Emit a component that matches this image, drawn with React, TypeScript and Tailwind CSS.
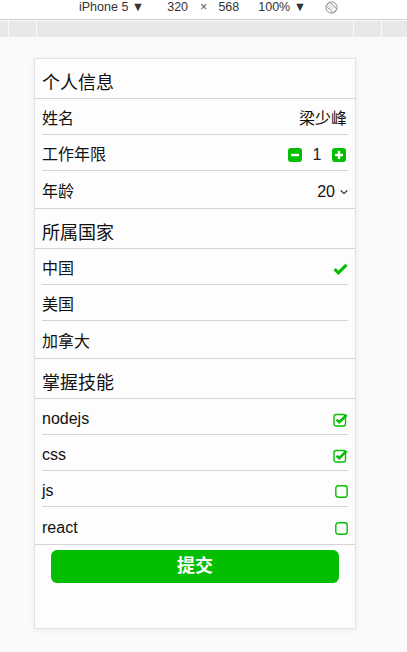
import React from "react";

const GREEN = "#04be02";

function StepIcon({ plus }: { plus?: boolean }) {
  return (
    <svg width="14" height="14" viewBox="0 0 14 14">
      <rect x="0" y="0" width="14" height="14" rx="3" fill={GREEN} />
      <rect x="3" y="5.8" width="8" height="2.4" fill="#fff" />
      {plus && <rect x="5.8" y="3" width="2.4" height="8" fill="#fff" />}
    </svg>
  );
}

function Check() {
  return (
    <svg width="15" height="12" viewBox="0 0 15 12">
      <path
        d="M1.6 6.2 L5.4 9.8 L13.4 1.8"
        fill="none"
        stroke={GREEN}
        strokeWidth="3.2"
        strokeLinejoin="miter"
      />
    </svg>
  );
}

function Box({ checked }: { checked: boolean }) {
  if (checked) {
    return (
      <svg width="15" height="15" viewBox="0 0 15 15">
        <rect x="1" y="2.5" width="11.5" height="11.5" rx="2.2" fill="#fff" stroke={GREEN} strokeWidth="1.4" />
        <path d="M3.6 7.6 L6.3 10.2 L13.6 2.9" fill="none" stroke={GREEN} strokeWidth="2.6" />
      </svg>
    );
  }
  return (
    <svg width="13" height="13" viewBox="0 0 13 13">
      <rect x="0.8" y="0.8" width="11.4" height="11.4" rx="2.4" fill="#fff" stroke={GREEN} strokeWidth="1.4" />
    </svg>
  );
}

function Rotate() {
  return (
    <svg width="13" height="13" viewBox="0 0 13 13">
      <circle cx="6.5" cy="6.5" r="5.6" fill="none" stroke="#8a8a8a" strokeWidth="1" />
      <g transform="rotate(-45 6.5 6.5)">
        <rect x="3.8" y="1.6" width="5.4" height="9.8" rx="1" fill="#fff" stroke="#8a8a8a" strokeWidth="0.9" />
        <line x1="4" y1="4" x2="9" y2="4" stroke="#aaa" strokeWidth="0.7" />
        <line x1="4" y1="6" x2="9" y2="6" stroke="#aaa" strokeWidth="0.7" />
        <line x1="4" y1="8" x2="9" y2="8" stroke="#aaa" strokeWidth="0.7" />
      </g>
    </svg>
  );
}

function Header({ title }: { title: string }) {
  return (
    <div className="h-[40px] pt-[9px] pl-[7px] flex items-center border-b border-[#d4d4d4] text-[18px] text-[#111]">
      {title}
    </div>
  );
}

function Row({
  label,
  last,
  children,
}: {
  label: string;
  last?: boolean;
  children?: React.ReactNode;
}) {
  return (
    <div
      className={
        last
          ? "h-[37px] pt-[5px] mx-[7px] flex items-center justify-between"
          : "h-[36px] pt-[5px] mx-[7px] flex items-center justify-between border-b border-[#d4d4d4]"
      }
    >
      <span>{label}</span>
      {children}
    </div>
  );
}

export default function App() {
  const skills = [
    { name: "nodejs", on: true },
    { name: "css", on: true },
    { name: "js", on: false },
    { name: "react", on: false },
  ];

  return (
    <div
      className="min-h-[652px] bg-[#fafafa]"
      style={{ fontFamily: '"Liberation Sans", "Noto Sans CJK SC", sans-serif' }}
    >
      {/* device toolbar */}
      <div className="h-[20px] bg-white border-b border-[#cfcfcf] flex items-start pl-[79px] text-[12.5px] leading-[15px] text-[#333]">
        <span>iPhone 5 ▼</span>
        <span className="ml-[23px]">320</span>
        <span className="ml-[12px] text-[#555]">×</span>
        <span className="ml-[11px]">568</span>
        <span className="ml-[19px]">100% ▼</span>
        <span className="ml-[19px] pt-[1px]">
          <Rotate />
        </span>
      </div>
      <div className="mt-px h-[16px] flex gap-px">
        <div className="w-[8px] bg-[#e8e8e8]" />
        <div className="w-[27px] bg-[#e8e8e8]" />
        <div className="w-[316px] bg-[#e8e8e8]" />
        <div className="w-[27px] bg-[#e8e8e8]" />
        <div className="flex-1 bg-[#e8e8e8]" />
      </div>

      {/* card */}
      <div className="ml-[34px] mt-[21px] w-[322px] h-[571px] bg-[#fdfdfd] border border-[#e2e2e2] shadow-[0_1px_6px_rgba(0,0,0,0.07)] text-[16px] text-[#111]">
        <Header title="个人信息" />
        <div className="border-b border-[#d4d4d4]">
          <Row label="姓名">
            <span className="mr-px">梁少峰</span>
          </Row>
          <Row label="工作年限">
            <div className="flex items-center gap-[10px] mr-[2px]">
              <StepIcon />
              <span className="w-[10px] text-center text-[#222]">1</span>
              <StepIcon plus />
            </div>
          </Row>
          <Row label="年龄" last>
            <div className="flex items-center gap-[5px]">
              <span>20</span>
              <svg width="8" height="6" viewBox="0 0 8 6">
                <path d="M0.8 1.5 L4 4.6 L7.2 1.5" fill="none" stroke="#222" strokeWidth="1.1" />
              </svg>
            </div>
          </Row>
        </div>

        <Header title="所属国家" />
        <div className="border-b border-[#d4d4d4]">
          <Row label="中国">
            <Check />
          </Row>
          <Row label="美国" />
          <Row label="加拿大" last />
        </div>

        <Header title="掌握技能" />
        <div className="border-b border-[#d4d4d4]">
          {skills.map((s, i) => (
            <Row key={s.name} label={s.name} last={i === skills.length - 1}>
              <Box checked={s.on} />
            </Row>
          ))}
        </div>

        <button className="mt-[5px] mx-auto block w-[288px] h-[33px] rounded-[6px] bg-[#04be02] text-white text-[18px] font-bold leading-[33px]">
          提交
        </button>
      </div>
    </div>
  );
}
